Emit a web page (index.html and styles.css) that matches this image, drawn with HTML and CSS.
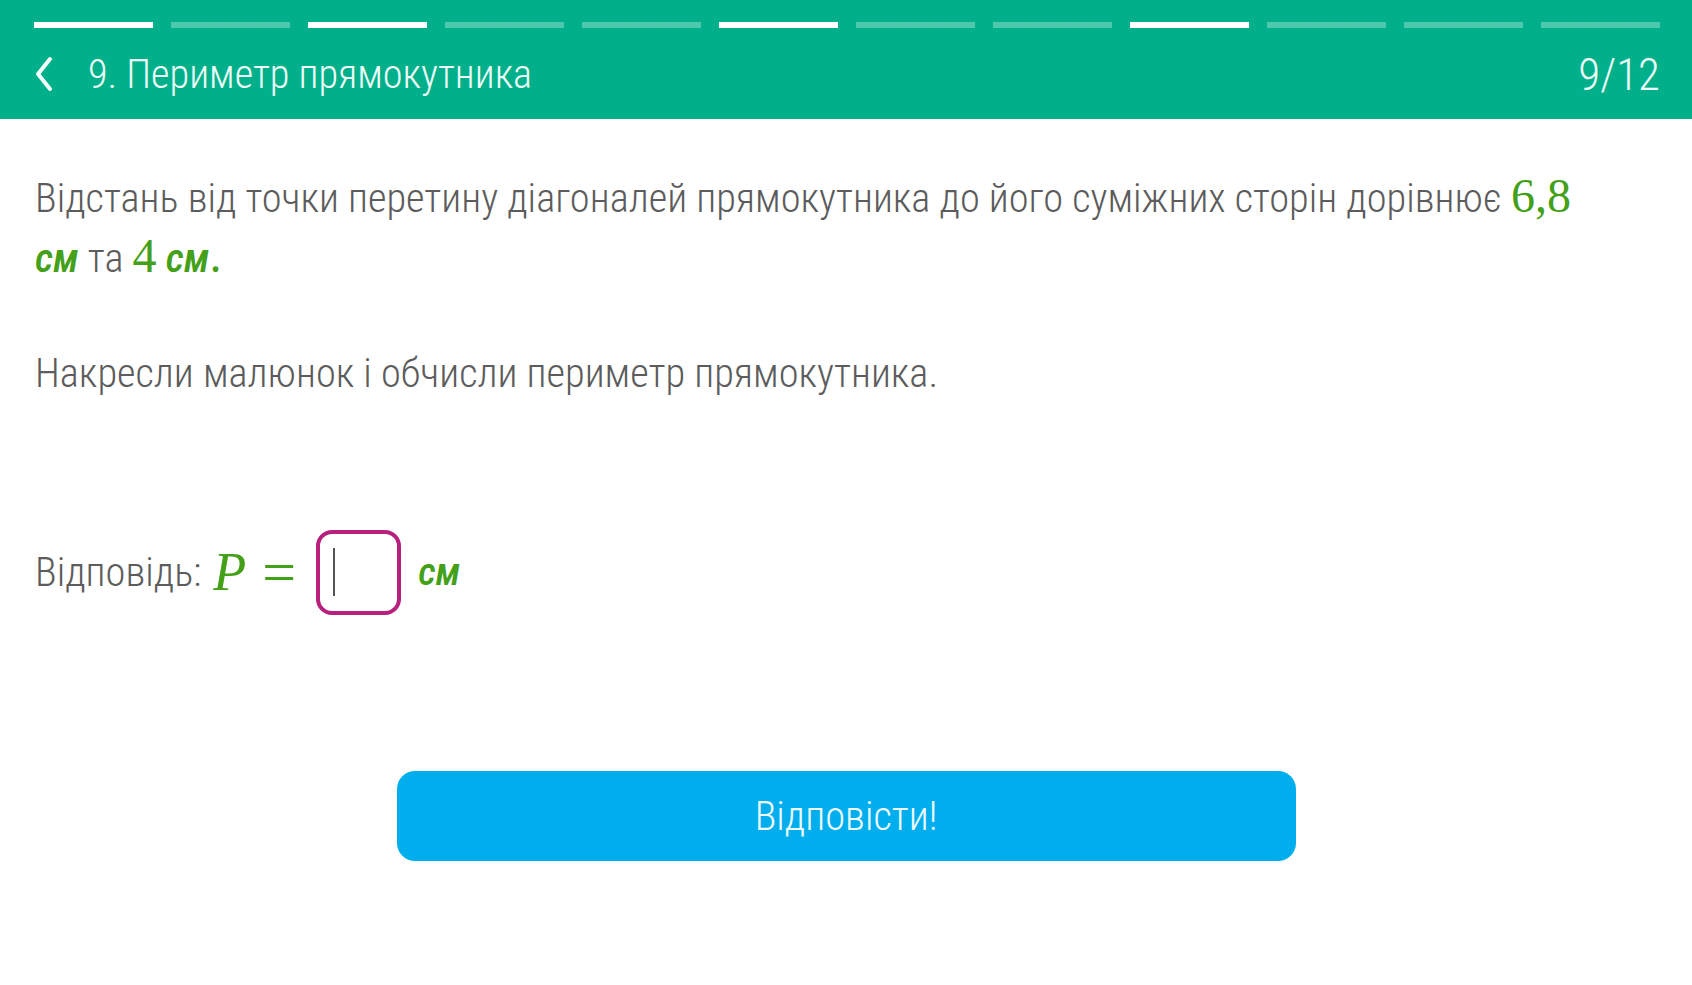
FILE: index.html
```html
<!DOCTYPE html>
<html lang="uk">
<head>
  <meta charset="UTF-8" />
  <meta name="viewport" content="width=device-width, initial-scale=1.0" />
  <title>Периметр прямокутника</title>
  <link rel="stylesheet" href="styles.css">
</head>
<body>
  <div class="header">
    <div class="progress">
      <span class="step done"></span>
      <span class="step"></span>
      <span class="step done"></span>
      <span class="step"></span>
      <span class="step"></span>
      <span class="step done"></span>
      <span class="step"></span>
      <span class="step"></span>
      <span class="step done"></span>
      <span class="step"></span>
      <span class="step"></span>
      <span class="step"></span>
    </div>
    <div class="titlebar">
      <a class="back" href="#">
        <svg width="20" height="36" viewBox="0 0 20 36"><polyline points="16,3 4,18 16,33" fill="none" stroke="#f2fffb" stroke-width="4" stroke-linecap="round" stroke-linejoin="round"/></svg>
      </a>
      <h1 class="title">9. Периметр прямокутника</h1>
      <div class="counter">9/12</div>
    </div>
  </div>

  <div class="content">
    <p class="task">Відстань від точки перетину діагоналей прямокутника до його суміжних сторін дорівнює <span class="num">6,8</span> <span class="unit">см</span> та <span class="num">4</span> <span class="unit">см</span><span class="num">.</span></p>

    <p class="task">Накресли малюнок і обчисли периметр прямокутника.</p>

    <div class="answer">
      <span class="label">Відповідь:</span>
      <span class="var">P</span>
      <span class="eq">=</span>
      <span class="box"><span class="cursor"></span></span>
      <span class="unit">см</span>
    </div>

    <div class="actions">
      <button class="submit">Відповісти!</button>
    </div>
  </div>
</body>
</html>
```

FILE: styles.css
```css
body {
  margin: 0;
  padding: 0;
  font-family: "Roboto Condensed", Roboto, sans-serif;
  font-weight: 300;
  font-stretch: condensed;
  background-color: #ffffff;
  color: #5c5c5c;
}

.header {
  background-color: #01b08a;
  height: 119px;
  box-sizing: border-box;
  padding: 22px 32px 0 34px;
}

.progress {
  display: flex;
  gap: 18px;
}
.step {
  flex: 1;
  height: 6px;
  background-color: rgba(255, 255, 255, 0.3);
}
.step.done {
  background-color: #ffffff;
}

.titlebar {
  display: flex;
  align-items: center;
  height: 66px;
  margin-top: 13px;
}
.back {
  display: flex;
  width: 54px;
}
.title {
  flex: 1;
  margin: 0;
  font-size: 40.3px;
  font-weight: 300;
  color: #eefcf7;
}
.counter {
  font-size: 45px;
  color: #eefcf7;
}

.content {
  padding: 50px 35px 0 35px;
}

.task {
  margin: 0 0 55px 0;
  font-size: 40.4px;
  line-height: 60px;
  padding-right: 60px;
}

.num {
  font-family: "Liberation Serif", serif;
  font-weight: 400;
  font-size: 48px;
  line-height: 0;
  color: #43a018;
}
.unit {
  font-family: Roboto, sans-serif;
  font-style: italic;
  font-weight: 500;
  line-height: 0;
  color: #43a018;
}

.answer {
  display: flex;
  align-items: center;
  height: 84px;
  margin-top: 126px;
  font-size: 40.4px;
}
.label {
  margin-right: 12px;
}
.var {
  font-family: "Liberation Serif", serif;
  font-style: italic;
  font-weight: 400;
  font-size: 54px;
  color: #43a018;
  margin-right: 16px;
}
.eq {
  font-family: "Liberation Serif", serif;
  font-weight: 400;
  font-size: 60px;
  color: #43a018;
  margin-right: 20px;
}
.box {
  border: 4px solid #b8207d;
  border-radius: 16px;
  display: flex;
  align-items: center;
  padding-left: 13px;
  box-sizing: border-box;
  width: 85px;
  height: 85px;
  margin-right: 17px;
}
.cursor {
  width: 2px;
  height: 48px;
  background-color: #555;
}
.answer .unit {
  font-size: 39px;
  line-height: normal;
}

.actions {
  display: flex;
  justify-content: center;
  margin-top: 157px;
}
.submit {
  width: 899px;
  height: 90px;
  border: none;
  border-radius: 18px;
  background-color: #00aeee;
  color: #eefaff;
  font-family: "Roboto Condensed", Roboto, sans-serif;
  font-weight: 300;
  font-stretch: condensed;
  font-size: 40.4px;
  cursor: pointer;
}
```
